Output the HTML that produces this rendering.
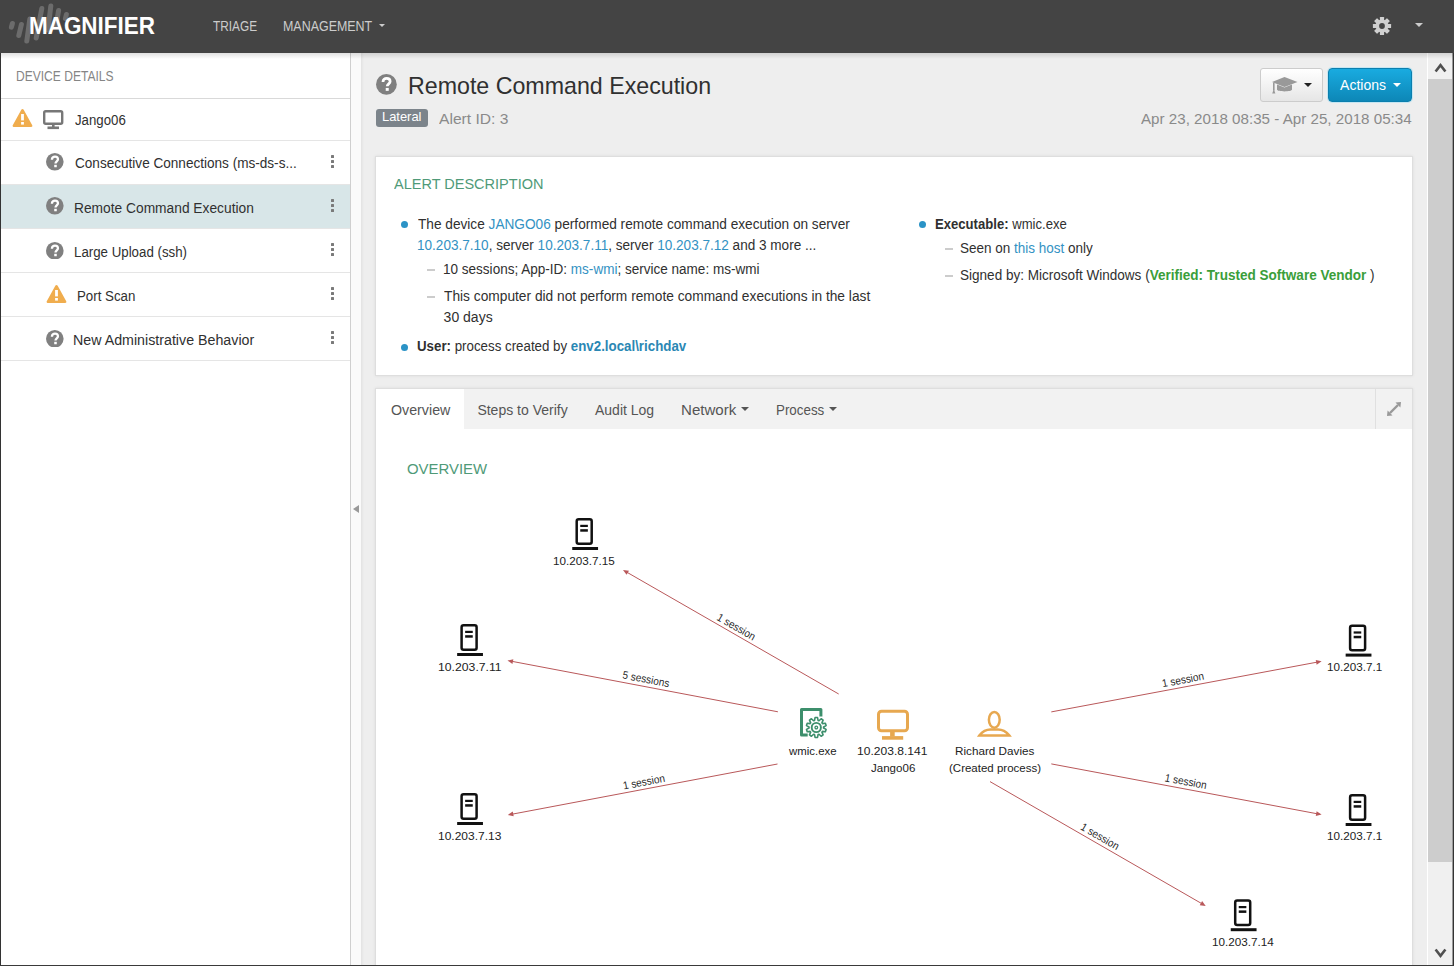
<!DOCTYPE html>
<html><head><meta charset="utf-8">
<style>
*{box-sizing:border-box;margin:0;padding:0}
html,body{width:1454px;height:966px;overflow:hidden}
body{position:relative;background:#eeeeee;font-family:"Liberation Sans",sans-serif;color:#333}
.t{position:absolute;white-space:nowrap;line-height:1}
.a{position:absolute}
.rowline{position:absolute;left:1px;width:349px;height:1px;background:#e5e5e5}
.keb{position:absolute;left:331px;width:3px}
.keb i{position:absolute;left:0;width:3px;height:3px;background:#7a7a7a;border-radius:0.5px}
.dot{position:absolute;width:7px;height:7px;border-radius:50%;background:#2b93c6}
.dash{position:absolute;width:8px;height:2px;background:#cccccc}
</style></head>
<body>
<!-- header -->
<div class="a" style="left:0;top:0;width:1454px;height:53px;background:#444444"></div>
<svg class="a" style="left:0;top:0" width="80" height="53" viewBox="0 0 80 53">
  <g stroke="#6c6c6c" stroke-width="5" stroke-linecap="round" fill="none">
    <line x1="12.4" y1="23.5" x2="11.4" y2="27.2"/>
    <line x1="21.4" y1="24.5" x2="18.8" y2="35.5"/>
    <line x1="29.8" y1="19" x2="26.8" y2="41"/>
    <line x1="41.8" y1="8.5" x2="36.2" y2="38"/>
    <line x1="50.8" y1="6" x2="48" y2="30"/>
    <line x1="58.6" y1="10.5" x2="56" y2="26"/>
    <line x1="66.4" y1="14.5" x2="65.4" y2="18.5"/>
  </g>
</svg>
<div class="a" style="left:379px;top:24px;width:0;height:0;border-left:3.5px solid transparent;border-right:3.5px solid transparent;border-top:3.5px solid #cccccc"></div>
<svg class="a" style="left:1372px;top:15.5px" width="20" height="20" viewBox="-10 -10 20 20">
  <g fill="#d0d0d0">
    <circle r="6.5"/>
    <g id="tooth"><rect x="-2.1" y="-9.1" width="4.2" height="4" rx="0.5"/></g>
    <use href="#tooth" transform="rotate(45)"/><use href="#tooth" transform="rotate(90)"/><use href="#tooth" transform="rotate(135)"/>
    <use href="#tooth" transform="rotate(180)"/><use href="#tooth" transform="rotate(225)"/><use href="#tooth" transform="rotate(270)"/><use href="#tooth" transform="rotate(315)"/>
  </g>
  <circle r="2.9" fill="#444444"/>
</svg>
<div class="a" style="left:1415px;top:23px;width:0;height:0;border-left:4px solid transparent;border-right:4px solid transparent;border-top:4px solid #cccccc"></div>

<!-- sidebar -->
<div class="a" style="left:0;top:53px;width:351px;height:913px;background:#ffffff;border-left:1px solid #333;border-right:1px solid #cfcfcf"></div>
<div class="a" style="left:351px;top:53px;width:10px;height:913px;background:#fafafa"></div>
<div class="a" style="left:361px;top:53px;width:3px;height:913px;background:linear-gradient(to right,#e2e2e2,#eeeeee)"></div>
<div class="a" style="left:353px;top:505px;width:0;height:0;border-top:4.5px solid transparent;border-bottom:4.5px solid transparent;border-right:6px solid #999999"></div>
<div class="rowline" style="top:98px;background:#d9d9d9"></div>
<div class="rowline" style="top:140px"></div>
<div class="a" style="left:1px;top:185px;width:349px;height:44px;background:#d8e6e8"></div>
<div class="rowline" style="top:184px"></div>
<div class="rowline" style="top:228px"></div>
<div class="rowline" style="top:272px"></div>
<div class="rowline" style="top:316px"></div>
<div class="rowline" style="top:360px"></div>
<!-- warning Jango06 -->
<svg class="a" style="left:12px;top:108px" width="21" height="20" viewBox="0 0 21 20">
  <path d="M10.5 2.2 L19.2 17.8 L1.8 17.8 Z" fill="#f0ad4e" stroke="#f0ad4e" stroke-width="2.4" stroke-linejoin="round"/>
  <rect x="9.1" y="6" width="2.8" height="6.4" fill="#fff"/><rect x="9.1" y="14" width="2.8" height="2.6" fill="#fff"/>
</svg>
<!-- monitor sidebar -->
<svg class="a" style="left:43px;top:110px" width="21" height="20" viewBox="0 0 21 20">
  <rect x="1.2" y="1.2" width="18" height="12.6" rx="1.5" fill="none" stroke="#777" stroke-width="2.4"/>
  <rect x="9" y="14" width="2.6" height="3" fill="#777"/>
  <rect x="4.5" y="16.5" width="11.5" height="2.6" fill="#777"/>
</svg>
<svg class="a" style="left:46.00px;top:153.30px" width="17.60" height="17.60" viewBox="0 0 20 20"><circle cx="10" cy="10" r="10" fill="#808080"/><path d="M6.7 7.6 C6.7 5.4 8.3 4.2 10.2 4.2 C12.2 4.2 13.6 5.5 13.6 7.2 C13.6 9.4 10.8 9.6 10.8 11.9" fill="none" stroke="#fff" stroke-width="2.6"/><rect x="9.35" y="13.4" width="2.9" height="2.8" fill="#fff"/></svg><svg class="a" style="left:46.00px;top:197.40px" width="17.60" height="17.60" viewBox="0 0 20 20"><circle cx="10" cy="10" r="10" fill="#808080"/><path d="M6.7 7.6 C6.7 5.4 8.3 4.2 10.2 4.2 C12.2 4.2 13.6 5.5 13.6 7.2 C13.6 9.4 10.8 9.6 10.8 11.9" fill="none" stroke="#fff" stroke-width="2.6"/><rect x="9.35" y="13.4" width="2.9" height="2.8" fill="#fff"/></svg><svg class="a" style="left:46.00px;top:241.50px" width="17.60" height="17.60" viewBox="0 0 20 20"><circle cx="10" cy="10" r="10" fill="#808080"/><path d="M6.7 7.6 C6.7 5.4 8.3 4.2 10.2 4.2 C12.2 4.2 13.6 5.5 13.6 7.2 C13.6 9.4 10.8 9.6 10.8 11.9" fill="none" stroke="#fff" stroke-width="2.6"/><rect x="9.35" y="13.4" width="2.9" height="2.8" fill="#fff"/></svg><svg class="a" style="left:46.00px;top:329.50px" width="17.60" height="17.60" viewBox="0 0 20 20"><circle cx="10" cy="10" r="10" fill="#808080"/><path d="M6.7 7.6 C6.7 5.4 8.3 4.2 10.2 4.2 C12.2 4.2 13.6 5.5 13.6 7.2 C13.6 9.4 10.8 9.6 10.8 11.9" fill="none" stroke="#fff" stroke-width="2.6"/><rect x="9.35" y="13.4" width="2.9" height="2.8" fill="#fff"/></svg>
<!-- warning Port Scan -->
<svg class="a" style="left:46px;top:284px" width="21" height="20" viewBox="0 0 21 20">
  <path d="M10.5 2.2 L19.2 17.8 L1.8 17.8 Z" fill="#f0ad4e" stroke="#f0ad4e" stroke-width="2.4" stroke-linejoin="round"/>
  <rect x="9.1" y="6" width="2.8" height="6.4" fill="#fff"/><rect x="9.1" y="14" width="2.8" height="2.6" fill="#fff"/>
</svg>
<div class="keb" style="top:155px;height:13px"><i style="top:0"></i><i style="top:5px"></i><i style="top:10px"></i></div><div class="keb" style="top:199px;height:13px"><i style="top:0"></i><i style="top:5px"></i><i style="top:10px"></i></div><div class="keb" style="top:243px;height:13px"><i style="top:0"></i><i style="top:5px"></i><i style="top:10px"></i></div><div class="keb" style="top:287px;height:13px"><i style="top:0"></i><i style="top:5px"></i><i style="top:10px"></i></div><div class="keb" style="top:331px;height:13px"><i style="top:0"></i><i style="top:5px"></i><i style="top:10px"></i></div>



<!-- title area -->
<svg class="a" style="left:376.00px;top:74.10px" width="20.80" height="20.80" viewBox="0 0 20 20"><circle cx="10" cy="10" r="10" fill="#808080"/><path d="M6.7 7.6 C6.7 5.4 8.3 4.2 10.2 4.2 C12.2 4.2 13.6 5.5 13.6 7.2 C13.6 9.4 10.8 9.6 10.8 11.9" fill="none" stroke="#fff" stroke-width="2.6"/><rect x="9.35" y="13.4" width="2.9" height="2.8" fill="#fff"/></svg>
<div class="a" style="left:376px;top:109px;width:52px;height:18px;border-radius:3px;background:#7c848b"></div>
<div class="a" style="left:1260px;top:68px;width:63px;height:34px;border-radius:3px;border:1px solid #cccccc;background:linear-gradient(to bottom,#ffffff,#e6e6e6)"></div>
<svg class="a" style="left:1271px;top:76px" width="28" height="19" viewBox="0 0 28 19">
  <path d="M1 6 L13.5 1 L26.5 6 L13.5 11 Z" fill="#999"/>
  <path d="M6 8.5 L6 13.5 C6 16 21 16 21 13.5 L21 8.5 L13.5 11.5 Z" fill="#999"/>
  <rect x="2" y="6.5" width="1.6" height="8" fill="#999"/>
  <path d="M1.2 17.5 L2.8 13 L4.4 17.5 Z" fill="#999"/>
</svg>
<div class="a" style="left:1304px;top:83px;width:0;height:0;border-left:4px solid transparent;border-right:4px solid transparent;border-top:4px solid #222"></div>
<div class="a" style="left:1328px;top:68px;width:84px;height:34px;border-radius:4px;border:1px solid #0b7fae;background:linear-gradient(to bottom,#19abe0,#0d87b7);box-shadow:0 0 0 1px rgba(170,225,245,0.6)"></div>
<div class="a" style="left:1393px;top:83px;width:0;height:0;border-left:4px solid transparent;border-right:4px solid transparent;border-top:4px solid #ffffff"></div>

<!-- description panel -->
<div class="a" style="left:375px;top:156px;width:1038px;height:220px;background:#ffffff;border:1px solid #dedede;box-shadow:0 0 3px rgba(0,0,0,0.08)"></div>
<div class="dot" style="left:401px;top:221px"></div>
<div class="dot" style="left:401px;top:344px"></div>
<div class="dot" style="left:919px;top:221px"></div>
<div class="dash" style="left:427px;top:269px"></div>
<div class="dash" style="left:427px;top:296px"></div>
<div class="dash" style="left:945px;top:248px"></div>
<div class="dash" style="left:945px;top:275px"></div>

<!-- tabs panel -->
<div class="a" style="left:375px;top:388px;width:1038px;height:600px;background:#ffffff;border:1px solid #dedede;box-shadow:0 0 3px rgba(0,0,0,0.08)"></div>
<div class="a" style="left:376px;top:389px;width:1036px;height:40px;background:#f2f2f2"></div>
<div class="a" style="left:376px;top:389px;width:88px;height:40px;background:#ffffff"></div>
<div class="a" style="left:1375px;top:389px;width:1px;height:40px;background:#e0e0e0"></div>
<div class="a" style="left:741px;top:407px;width:0;height:0;border-left:4px solid transparent;border-right:4px solid transparent;border-top:4px solid #555"></div>
<div class="a" style="left:828.5px;top:407px;width:0;height:0;border-left:4px solid transparent;border-right:4px solid transparent;border-top:4px solid #555"></div>
<svg class="a" style="left:1386px;top:401px" width="16" height="16" viewBox="0 0 16 16">
  <path d="M15 1 L9.5 1.6 L14.4 6.5 Z M1 15 L6.5 14.4 L1.6 9.5 Z" fill="#999"/>
  <line x1="12" y1="4" x2="4" y2="12" stroke="#999" stroke-width="2.4"/>
</svg>

<svg class="a" style="left:0;top:0" width="1384" height="966" viewBox="0 0 1384 966">
<defs><clipPath id="gc"><rect x="376" y="429" width="1008" height="537"/></clipPath></defs><g clip-path="url(#gc)">
<line x1="838.70" y1="694.00" x2="626.90" y2="572.24" stroke="#b9585a" stroke-width="1"/><path d="M623.00 570.00 L628.96 570.66 L626.57 574.82 Z" fill="#b9585a"/><text x="0" y="3.6" transform="translate(736.30,627.00) rotate(29.89)" text-anchor="middle" font-family="Liberation Sans" font-size="11" fill="#2a2a2a" textLength="42.5" lengthAdjust="spacingAndGlyphs">1 session</text>
<line x1="777.90" y1="711.80" x2="511.92" y2="661.34" stroke="#b9585a" stroke-width="1"/><path d="M507.50 660.50 L513.35 659.17 L512.46 663.88 Z" fill="#b9585a"/><text x="0" y="3.6" transform="translate(646.00,679.20) rotate(10.74)" text-anchor="middle" font-family="Liberation Sans" font-size="11" fill="#2a2a2a" textLength="47.5" lengthAdjust="spacingAndGlyphs">5 sessions</text>
<line x1="777.50" y1="764.00" x2="512.22" y2="814.16" stroke="#b9585a" stroke-width="1"/><path d="M507.80 815.00 L512.76 811.62 L513.65 816.34 Z" fill="#b9585a"/><text x="0" y="3.6" transform="translate(643.90,782.00) rotate(-10.71)" text-anchor="middle" font-family="Liberation Sans" font-size="11" fill="#2a2a2a" textLength="42.5" lengthAdjust="spacingAndGlyphs">1 session</text>
<line x1="1051.30" y1="711.90" x2="1317.18" y2="662.13" stroke="#b9585a" stroke-width="1"/><path d="M1321.60 661.30 L1316.64 664.67 L1315.75 659.95 Z" fill="#b9585a"/><text x="0" y="3.6" transform="translate(1183.00,679.90) rotate(-10.60)" text-anchor="middle" font-family="Liberation Sans" font-size="11" fill="#2a2a2a" textLength="42.5" lengthAdjust="spacingAndGlyphs">1 session</text>
<line x1="1051.30" y1="763.90" x2="1317.18" y2="813.77" stroke="#b9585a" stroke-width="1"/><path d="M1321.60 814.60 L1315.75 815.94 L1316.64 811.23 Z" fill="#b9585a"/><text x="0" y="3.6" transform="translate(1185.80,781.50) rotate(10.62)" text-anchor="middle" font-family="Liberation Sans" font-size="11" fill="#2a2a2a" textLength="42.5" lengthAdjust="spacingAndGlyphs">1 session</text>
<line x1="990.00" y1="781.60" x2="1201.80" y2="903.65" stroke="#b9585a" stroke-width="1"/><path d="M1205.70 905.90 L1199.74 905.23 L1202.13 901.07 Z" fill="#b9585a"/><text x="0" y="3.6" transform="translate(1099.90,836.60) rotate(29.95)" text-anchor="middle" font-family="Liberation Sans" font-size="11" fill="#2a2a2a" textLength="42.5" lengthAdjust="spacingAndGlyphs">1 session</text>
<g transform="translate(575.45,518.00)"><rect x="1.25" y="1.25" width="15" height="24.5" rx="2" fill="none" stroke="#111" stroke-width="2.5"/><rect x="4.8" y="6.8" width="7.6" height="2.2" fill="#111"/><rect x="4.8" y="11.2" width="7.6" height="2.5" fill="#111"/><rect x="-3.2" y="29" width="25.8" height="3" fill="#111"/></g>
<g transform="translate(460.35,624.00)"><rect x="1.25" y="1.25" width="15" height="24.5" rx="2" fill="none" stroke="#111" stroke-width="2.5"/><rect x="4.8" y="6.8" width="7.6" height="2.2" fill="#111"/><rect x="4.8" y="11.2" width="7.6" height="2.5" fill="#111"/><rect x="-3.2" y="29" width="25.8" height="3" fill="#111"/></g>
<g transform="translate(460.35,793.00)"><rect x="1.25" y="1.25" width="15" height="24.5" rx="2" fill="none" stroke="#111" stroke-width="2.5"/><rect x="4.8" y="6.8" width="7.6" height="2.2" fill="#111"/><rect x="4.8" y="11.2" width="7.6" height="2.5" fill="#111"/><rect x="-3.2" y="29" width="25.8" height="3" fill="#111"/></g>
<g transform="translate(1348.85,624.60)"><rect x="1.25" y="1.25" width="15" height="24.5" rx="2" fill="none" stroke="#111" stroke-width="2.5"/><rect x="4.8" y="6.8" width="7.6" height="2.2" fill="#111"/><rect x="4.8" y="11.2" width="7.6" height="2.5" fill="#111"/><rect x="-3.2" y="29" width="25.8" height="3" fill="#111"/></g>
<g transform="translate(1348.85,794.00)"><rect x="1.25" y="1.25" width="15" height="24.5" rx="2" fill="none" stroke="#111" stroke-width="2.5"/><rect x="4.8" y="6.8" width="7.6" height="2.2" fill="#111"/><rect x="4.8" y="11.2" width="7.6" height="2.5" fill="#111"/><rect x="-3.2" y="29" width="25.8" height="3" fill="#111"/></g>
<g transform="translate(1233.95,899.20)"><rect x="1.25" y="1.25" width="15" height="24.5" rx="2" fill="none" stroke="#111" stroke-width="2.5"/><rect x="4.8" y="6.8" width="7.6" height="2.2" fill="#111"/><rect x="4.8" y="11.2" width="7.6" height="2.5" fill="#111"/><rect x="-3.2" y="29" width="25.8" height="3" fill="#111"/></g>
<g transform="translate(799.5,707.5)"><path d="M8.2 27.6 L2 27.6 L2 1.9 L21.4 1.9 L21.4 9" fill="none" stroke="#3d8f6c" stroke-width="3" stroke-linejoin="round"/><g transform="translate(16.8,20)"><path d="M-1.77 -7.08 L-1.22 -9.93 L1.22 -9.93 L1.77 -7.08 L2.73 -6.77 L4.85 -8.75 L6.82 -7.31 L5.59 -4.69 L6.19 -3.87 L9.06 -4.23 L9.82 -1.91 L7.28 -0.51 L7.28 0.51 L9.82 1.91 L9.06 4.23 L6.19 3.87 L5.59 4.69 L6.82 7.31 L4.85 8.75 L2.73 6.77 L1.77 7.08 L1.22 9.93 L-1.22 9.93 L-1.77 7.08 L-2.73 6.77 L-4.85 8.75 L-6.82 7.31 L-5.59 4.69 L-6.19 3.87 L-9.06 4.23 L-9.82 1.91 L-7.28 0.51 L-7.28 -0.51 L-9.82 -1.91 L-9.06 -4.23 L-6.19 -3.87 L-5.59 -4.69 L-6.82 -7.31 L-4.85 -8.75 L-2.73 -6.77 Z" fill="#fff" stroke="#3d8f6c" stroke-width="1.6" stroke-linejoin="round"/><circle r="4.6" fill="none" stroke="#3d8f6c" stroke-width="1.9"/><circle r="1.3" fill="none" stroke="#3d8f6c" stroke-width="1.3"/></g></g>
<g transform="translate(876.5,709.5)"><rect x="2" y="1.8" width="29" height="19.4" rx="3" fill="none" stroke="#e7a850" stroke-width="3"/><rect x="13.6" y="22.5" width="4.6" height="4.5" fill="#e7a850"/><rect x="5.5" y="26.6" width="21.2" height="3.6" fill="#e7a850"/></g>
<ellipse cx="994.3" cy="719.85" rx="5.4" ry="7.8" fill="none" stroke="#e7a850" stroke-width="2.5"/>
<path d="M979.5 735.4 C983 731 987 729.6 990.5 729.6 L998 729.6 C1001.5 729.6 1005.5 731 1009.2 735.4 Z" fill="none" stroke="#e7a850" stroke-width="2.5" stroke-linejoin="miter"/>
</g></svg>

<!-- scrollbar -->
<div class="a" style="left:1427px;top:53px;width:1px;height:913px;background:#ffffff"></div>
<div class="a" style="left:1428px;top:53px;width:25px;height:913px;background:#f0f0f0"></div>
<div class="a" style="left:1428px;top:79px;width:24px;height:783px;background:#cdcdcd"></div>
<svg class="a" style="left:1434px;top:62px" width="13" height="11" viewBox="0 0 13 11"><path d="M1.6 9.5 L6.5 3.2 L11.4 9.5" fill="none" stroke="#505050" stroke-width="2.6"/></svg>
<svg class="a" style="left:1434px;top:948px" width="13" height="11" viewBox="0 0 13 11"><path d="M1.6 1.5 L6.5 7.8 L11.4 1.5" fill="none" stroke="#505050" stroke-width="2.6"/></svg>
<div class="a" style="left:1452px;top:53px;width:1px;height:913px;background:#9a9a9a"></div><div class="a" style="left:1453px;top:53px;width:1px;height:913px;background:#333"></div>
<div class="a" style="left:0;top:965px;width:1454px;height:1px;background:#3a3a3a"></div>

<!-- header shadow -->
<div class="a" style="left:1px;top:53px;width:1452px;height:6px;background:linear-gradient(to bottom,rgba(0,0,0,0.12),rgba(0,0,0,0))"></div>
<div class="t" style="left:29.36px;top:13.78px;font-size:24px;color:#ffffff;font-weight:bold;transform:scaleX(0.9353);transform-origin:0 0;">MAGNIFIER</div>
<div class="t" style="left:213.00px;top:19.15px;font-size:14px;color:#cccccc;font-weight:normal;transform:scaleX(0.8462);transform-origin:0 0;">TRIAGE</div>
<div class="t" style="left:283.11px;top:19.15px;font-size:14px;color:#cccccc;font-weight:normal;transform:scaleX(0.8889);transform-origin:0 0;">MANAGEMENT</div>
<div class="t" style="left:15.64px;top:69.05px;font-size:14px;color:#858585;font-weight:normal;transform:scaleX(0.8607);transform-origin:0 0;">DEVICE DETAILS</div>
<div class="t" style="left:74.80px;top:112.95px;font-size:14px;color:#303030;font-weight:normal;transform:scaleX(0.9444);transform-origin:0 0;">Jango06</div>
<div class="t" style="left:74.50px;top:156.45px;font-size:14px;color:#303030;font-weight:normal;transform:scaleX(0.9693);transform-origin:0 0;">Consecutive Connections (ms-ds-s...</div>
<div class="t" style="left:73.52px;top:200.65px;font-size:14px;color:#303030;font-weight:normal;transform:scaleX(0.9834);transform-origin:0 0;">Remote Command Execution</div>
<div class="t" style="left:73.55px;top:244.65px;font-size:14px;color:#303030;font-weight:normal;transform:scaleX(0.9492);transform-origin:0 0;">Large Upload (ssh)</div>
<div class="t" style="left:77.25px;top:288.95px;font-size:14px;color:#303030;font-weight:normal;transform:scaleX(0.9500);transform-origin:0 0;">Port Scan</div>
<div class="t" style="left:73.48px;top:332.65px;font-size:14px;color:#303030;font-weight:normal;transform:scaleX(1.0169);transform-origin:0 0;">New Administrative Behavior</div>
<div class="t" style="left:407.77px;top:73.58px;font-size:24px;color:#303030;font-weight:normal;transform:scaleX(0.9668);transform-origin:0 0;">Remote Command Execution</div>
<div class="t" style="left:439.00px;top:111.30px;font-size:15px;color:#8a8a8a;font-weight:normal;transform:scaleX(1.0409);transform-origin:0 0;">Alert ID: 3</div>
<div class="t" style="right:42.78px;top:111.30px;font-size:15px;color:#8a8a8a;font-weight:normal;transform:scaleX(1.0112);transform-origin:100% 0;">Apr 23, 2018 08:35 - Apr 25, 2018 05:34</div>
<div class="t" style="left:381.85px;top:110.37px;font-size:13.5px;color:#ffffff;font-weight:normal;transform:scaleX(0.9550);transform-origin:0 0;">Lateral</div>
<div class="t" style="left:1340.10px;top:77.75px;font-size:14px;color:#ffffff;font-weight:normal;">Actions</div>
<div class="t" style="left:393.50px;top:176.30px;font-size:15px;color:#4f9a78;font-weight:normal;transform:scaleX(0.9675);transform-origin:0 0;">ALERT DESCRIPTION</div>
<div class="t" style="left:417.70px;top:216.75px;font-size:14px;color:#303030;font-weight:normal;transform:scaleX(0.9752);transform-origin:0 0;">The device <span style="color:#3392c3">JANGO06</span> performed remote command execution on server</div>
<div class="t" style="left:416.93px;top:237.65px;font-size:14px;color:#303030;font-weight:normal;transform:scaleX(0.9684);transform-origin:0 0;"><span style="color:#3392c3">10.203.7.10</span>, server <span style="color:#3392c3">10.203.7.11</span>, server <span style="color:#3392c3">10.203.7.12</span> and 3 more ...</div>
<div class="t" style="left:442.63px;top:262.15px;font-size:14px;color:#303030;font-weight:normal;transform:scaleX(0.9663);transform-origin:0 0;">10 sessions; App-ID: <span style="color:#3392c3">ms-wmi</span>; service name: ms-wmi</div>
<div class="t" style="left:443.60px;top:288.95px;font-size:14px;color:#303030;font-weight:normal;transform:scaleX(0.9816);transform-origin:0 0;">This computer did not perform remote command executions in the last</div>
<div class="t" style="left:443.60px;top:309.55px;font-size:14px;color:#303030;font-weight:normal;">30 days</div>
<div class="t" style="left:416.75px;top:339.45px;font-size:14px;color:#303030;font-weight:normal;transform:scaleX(0.9504);transform-origin:0 0;"><b>User:</b> process created by <span style="color:#2a87b4;font-weight:bold">env2.local\richdav</span></div>
<div class="t" style="left:934.86px;top:216.75px;font-size:14px;color:#303030;font-weight:normal;transform:scaleX(0.9357);transform-origin:0 0;"><b>Executable:</b> wmic.exe</div>
<div class="t" style="left:960.24px;top:240.75px;font-size:14px;color:#303030;font-weight:normal;transform:scaleX(0.9635);transform-origin:0 0;">Seen on <span style="color:#3392c3">this host</span> only</div>
<div class="t" style="left:960.23px;top:267.75px;font-size:14px;color:#303030;font-weight:normal;transform:scaleX(0.9672);transform-origin:0 0;">Signed by: Microsoft Windows (<b style="color:#3a9e3a">Verified: Trusted Software Vendor</b> )</div>
<div class="t" style="left:390.60px;top:402.65px;font-size:14px;color:#555555;font-weight:normal;transform:scaleX(1.0169);transform-origin:0 0;">Overview</div>
<div class="t" style="left:477.40px;top:402.65px;font-size:14px;color:#555555;font-weight:normal;">Steps to Verify</div>
<div class="t" style="left:595.00px;top:402.65px;font-size:14px;color:#555555;font-weight:normal;">Audit Log</div>
<div class="t" style="left:681.32px;top:402.65px;font-size:14px;color:#555555;font-weight:normal;transform:scaleX(1.0760);transform-origin:0 0;">Network</div>
<div class="t" style="left:775.74px;top:402.65px;font-size:14px;color:#555555;font-weight:normal;transform:scaleX(0.9551);transform-origin:0 0;">Process</div>
<div class="t" style="left:406.70px;top:460.60px;font-size:15px;color:#4f9a78;font-weight:normal;transform:scaleX(0.9938);transform-origin:0 0;">OVERVIEW</div>
<div class="t" style="left:553.39px;top:556.31px;font-size:10.5px;color:#222222;font-weight:normal;transform:scaleX(1.1127);transform-origin:0 0;">10.203.7.15</div>
<div class="t" style="left:437.89px;top:662.41px;font-size:10.5px;color:#222222;font-weight:normal;transform:scaleX(1.1642);transform-origin:0 0;">10.203.7.11</div>
<div class="t" style="left:437.91px;top:831.41px;font-size:10.5px;color:#222222;font-weight:normal;transform:scaleX(1.1426);transform-origin:0 0;">10.203.7.13</div>
<div class="t" style="left:1212.34px;top:937.11px;font-size:10.5px;color:#222222;font-weight:normal;transform:scaleX(1.1145);transform-origin:0 0;">10.203.7.14</div>
<div class="t" style="left:788.60px;top:746.01px;font-size:10.5px;color:#222222;font-weight:normal;transform:scaleX(1.0864);transform-origin:0 0;">wmic.exe</div>
<div class="t" style="left:857.20px;top:746.01px;font-size:10.5px;color:#222222;font-weight:normal;transform:scaleX(1.1483);transform-origin:0 0;">10.203.8.141</div>
<div class="t" style="left:871.00px;top:762.91px;font-size:10.5px;color:#222222;font-weight:normal;transform:scaleX(1.1000);transform-origin:0 0;">Jango06</div>
<div class="t" style="left:954.83px;top:746.01px;font-size:10.5px;color:#222222;font-weight:normal;transform:scaleX(1.1157);transform-origin:0 0;">Richard Davies</div>
<div class="t" style="left:948.60px;top:762.91px;font-size:10.5px;color:#222222;font-weight:normal;transform:scaleX(1.0952);transform-origin:0 0;">(Created process)</div>
<div class="t" style="left:1327.49px;top:662.41px;font-size:10.5px;color:#222222;font-weight:normal;transform:scaleX(1.1125);transform-origin:0 0;">10.203.7.1</div>
<div class="t" style="left:1327.49px;top:831.41px;font-size:10.5px;color:#222222;font-weight:normal;transform:scaleX(1.1125);transform-origin:0 0;">10.203.7.1</div>
</body></html>
